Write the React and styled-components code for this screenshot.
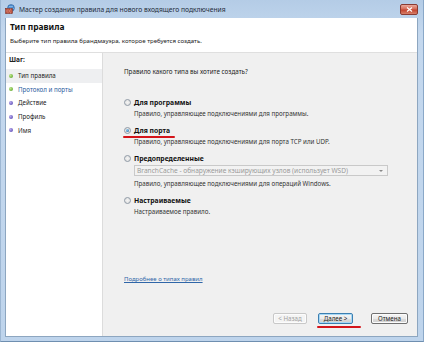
import React from "react";
import styled, { createGlobalStyle } from "styled-components";

const Global = createGlobalStyle`
  html, body { margin: 0; padding: 0; background: #fff; }
  body { font-family: "Noto Sans", "Liberation Sans", sans-serif; }
`;

const Window = styled.div`
  width: 424px;
  height: 342px;
  box-sizing: border-box;
  display: flex;
  flex-direction: column;
  background: linear-gradient(180deg, #b4cce6 0%, #c4d8ee 10%, #bed4ec 100%);
  border-bottom: 1px solid #6f8fb0;
  border-right: 1px solid #8aa8c8;
  border-left: 1px solid #9db7d3;
`;

const TitleBar = styled.div`
  height: 18px;
  flex: none;
  display: flex;
  align-items: center;
  padding: 0 5px 0 4px;
  gap: 4px;
`;

const TitleText = styled.div`
  font-size: 6.7px;
  color: #1e2b3a;
  flex: 1;
  white-space: nowrap;
`;

const CloseBtn = styled.div`
  width: 18px;
  height: 11px;
  margin-top: 1px;
  border-radius: 2px;
  border: 1px solid #8a3b32;
  box-sizing: border-box;
  background: linear-gradient(180deg, #e9a99c 0%, #d66b58 45%, #c3432e 55%, #d6806a 100%);
  display: flex;
  align-items: center;
  justify-content: center;
`;

const Client = styled.div`
  flex: 1;
  margin: 0 5px 4px 4px;
  display: flex;
  flex-direction: column;
  border: 1px solid #8da6c0;
  border-top: none;
  background: #f0f0f0;
`;

const Header = styled.div`
  height: 35px;
  flex: none;
  background: #fff;
  border-bottom: 1px solid #dfdfdf;
  box-sizing: border-box;
  padding: 3px 0 0 4px;
  display: flex;
  flex-direction: column;
`;

const HeaderTitle = styled.div`
  font-size: 8.4px;
  font-weight: bold;
  color: #111;
  line-height: 11px;
`;

const HeaderSub = styled.div`
  font-size: 6.1px;
  color: #222;
  margin-top: 4px;
  line-height: 10px;
  white-space: nowrap;
`;

const Body = styled.div`
  flex: 1;
  display: flex;
  min-height: 0;
`;

const Sidebar = styled.div`
  width: 96px;
  flex: none;
  background: #fff;
  border-right: 1px solid #dcdcdc;
  padding-top: 2px;
  display: flex;
  flex-direction: column;
`;

const StepsLabel = styled.div`
  font-size: 6.6px;
  font-weight: bold;
  color: #222;
  padding: 0 0 5px 3px;
  line-height: 9px;
`;

const Step = styled.div`
  height: 13.6px;
  display: flex;
  align-items: center;
  gap: 5px;
  padding-left: 3px;
  font-size: 6.2px;
  color: ${(p) => (p.$link ? "#2a5d9e" : "#222")};
  background: ${(p) => (p.$current ? "#eeeff1" : "transparent")};
`;

const Bullet = styled.span`
  width: 4px;
  height: 4px;
  border-radius: 50%;
  background: ${(p) =>
    p.$done
      ? "radial-gradient(circle at 35% 35%, #bfe88a, #4c9a1c)"
      : "radial-gradient(circle at 35% 35%, #b7a8f0, #4b3ca6)"};
  flex: none;
`;

const Main = styled.div`
  flex: 1;
  display: flex;
  flex-direction: column;
  padding: 14px 9px 12px 21px;
  min-width: 0;
`;

const Question = styled.div`
  font-size: 6.3px;
  color: #222;
  line-height: 10px;
`;

const Options = styled.div`
  margin-top: 20px;
  display: flex;
  flex-direction: column;
  gap: 6px;
`;

const Option = styled.div`
  display: flex;
  flex-direction: column;
`;

const OptionHead = styled.label`
  display: flex;
  align-items: center;
  gap: 3px;
  height: 10px;
`;

const OptionTitle = styled.span`
  position: relative;
  font-size: 6.8px;
  font-weight: bold;
  color: #111;
  white-space: nowrap;
`;

const RedMark = styled.span`
  position: absolute;
  left: -11px;
  right: -5px;
  bottom: -3px;
  height: 2px;
  border-radius: 1px;
  background: #d4141a;
`;

const Radio = styled.span`
  width: 7px;
  height: 7px;
  border-radius: 50%;
  box-sizing: border-box;
  border: 1px solid #8f9aa6;
  background: radial-gradient(circle at 50% 50%, #f4f4f4 0%, #dcdcdc 100%);
  display: flex;
  align-items: center;
  justify-content: center;
  flex: none;
  &::after {
    content: "";
    width: 3px;
    height: 3px;
    border-radius: 50%;
    background: ${(p) =>
      p.$checked ? "radial-gradient(circle at 35% 35%, #8fd0f5, #1c5f9a)" : "transparent"};
  }
`;

const Desc = styled.div`
  font-size: 6.2px;
  color: #333;
  padding-left: 10px;
  line-height: 11px;
  margin-top: 1px;
  white-space: nowrap;
`;

const Select = styled.div`
  margin: 2px 0 1px 10px;
  width: 254px;
  height: 11px;
  box-sizing: border-box;
  border: 1px solid #c9c9c9;
  background: #f2f2f2;
  display: flex;
  align-items: center;
  justify-content: space-between;
  padding: 0 4px 0 2px;
  font-size: 6.6px;
  color: #9a9a9a;
  white-space: nowrap;
`;

const Arrow = styled.span`
  width: 0;
  height: 0;
  border-left: 2px solid transparent;
  border-right: 2px solid transparent;
  border-top: 2px solid #888;
`;

const Spacer = styled.div`
  flex: 1;
`;

const Link = styled.a`
  font-size: 6px;
  color: #2f66a8;
  text-decoration: underline;
  line-height: 10px;
  margin-bottom: 29px;
`;

const Buttons = styled.div`
  display: flex;
  justify-content: flex-end;
`;

const Button = styled.div`
  position: relative;
  width: ${(p) => p.$w}px;
  margin-left: ${(p) => p.$gap || 0}px;
  height: 11px;
  box-sizing: border-box;
  border: 1px solid ${(p) => (p.$disabled ? "#c8c8c8" : p.$default ? "#3c7fb1" : "#707070")};
  border-radius: 2px;
  background: ${(p) =>
    p.$disabled
      ? "#f4f4f4"
      : "linear-gradient(180deg, #f6f6f6 0%, #ebebeb 50%, #dddddd 51%, #cfcfcf 100%)"};
  box-shadow: ${(p) => (p.$default ? "inset 0 0 0 1px #a8d8f5" : "inset 0 0 0 1px #fcfcfc")};
  font-size: 6.2px;
  color: ${(p) => (p.$disabled ? "#a0a0a0" : "#222")};
  display: flex;
  align-items: center;
  justify-content: center;
  white-space: nowrap;
`;

const ButtonMark = styled.span`
  position: absolute;
  left: -2px;
  right: -9px;
  bottom: -5px;
  height: 2px;
  border-radius: 1px;
  background: #d4141a;
`;

const FirewallIcon = () => (
  <svg width="10" height="10" viewBox="0 0 10 10">
    <circle cx="6" cy="4" r="3.4" fill="#4f8fd0" stroke="#2d5f98" strokeWidth="0.6" />
    <path d="M4 2.5 Q6 3 8 2.2 M3.2 4.5 H8.8" stroke="#a9d4f5" strokeWidth="0.6" fill="none" />
    <rect x="0.5" y="4.5" width="7" height="5" fill="#b6402b" stroke="#6b1f14" strokeWidth="0.5" />
    <path
      d="M0.5 6.2 H7.5 M0.5 7.9 H7.5 M3 4.5 V6.2 M5.5 4.5 V6.2 M2 6.2 V7.9 M4.5 6.2 V7.9 M3 7.9 V9.5 M5.5 7.9 V9.5"
      stroke="#e6b7a8"
      strokeWidth="0.4"
    />
  </svg>
);

const steps = [
  { label: "Тип правила", done: true, current: true },
  { label: "Протокол и порты", done: true, link: true },
  { label: "Действие" },
  { label: "Профиль" },
  { label: "Имя" },
];

export default function App() {
  return (
    <>
      <Global />
      <Window>
        <TitleBar>
          <FirewallIcon />
          <TitleText>Мастер создания правила для нового входящего подключения</TitleText>
          <CloseBtn>
            <svg width="7" height="5" viewBox="0 0 7 5">
              <path d="M1 0.5 L6 4.5 M6 0.5 L1 4.5" stroke="#fff" strokeWidth="1.2" />
            </svg>
          </CloseBtn>
        </TitleBar>
        <Client>
          <Header>
            <HeaderTitle>Тип правила</HeaderTitle>
            <HeaderSub>Выберите тип правила брандмауэра, которое требуется создать.</HeaderSub>
          </Header>
          <Body>
            <Sidebar>
              <StepsLabel>Шаг:</StepsLabel>
              {steps.map((s) => (
                <Step key={s.label} $current={s.current} $link={s.link}>
                  <Bullet $done={s.done} />
                  {s.label}
                </Step>
              ))}
            </Sidebar>
            <Main>
              <Question>Правило какого типа вы хотите создать?</Question>
              <Options>
                <Option>
                  <OptionHead>
                    <Radio />
                    <OptionTitle>Для программы</OptionTitle>
                  </OptionHead>
                  <Desc>Правило, управляющее подключениями для программы.</Desc>
                </Option>
                <Option>
                  <OptionHead>
                    <Radio $checked />
                    <OptionTitle>
                      Для порта
                      <RedMark />
                    </OptionTitle>
                  </OptionHead>
                  <Desc>Правило, управляющее подключениями для порта TCP или UDP.</Desc>
                </Option>
                <Option>
                  <OptionHead>
                    <Radio />
                    <OptionTitle>Предопределенные</OptionTitle>
                  </OptionHead>
                  <Select>
                    BranchCache - обнаружение кэширующих узлов (использует WSD)
                    <Arrow />
                  </Select>
                  <Desc>Правило, управляющее подключениями для операций Windows.</Desc>
                </Option>
                <Option>
                  <OptionHead>
                    <Radio />
                    <OptionTitle>Настраиваемые</OptionTitle>
                  </OptionHead>
                  <Desc>Настраиваемое правило.</Desc>
                </Option>
              </Options>
              <Spacer />
              <Link href="#">Подробнее о типах правил</Link>
              <Buttons>
                <Button $w={34} $disabled>
                  &lt; Назад
                </Button>
                <Button $w={35} $gap={11} $default>
                  Далее &gt;
                  <ButtonMark />
                </Button>
                <Button $w={37} $gap={18}>
                  Отмена
                </Button>
              </Buttons>
            </Main>
          </Body>
        </Client>
      </Window>
    </>
  );
}
